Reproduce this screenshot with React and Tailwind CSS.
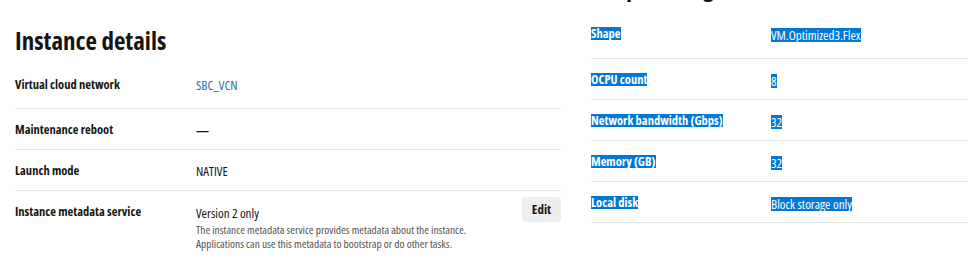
import React from 'react';

const font = { fontFamily: '"Open Sans", "Noto Sans", sans-serif', fontStretch: 'condensed' };

function Row({ label, children, className = "pt-[14px] pb-[12px]" }) {
  return (
    <div className={"flex items-start border-b border-[#e4e3e1] " + className}>
      <div className="w-[181px] shrink-0 text-[12.5px] leading-[14px] font-bold text-[#161513]">{label}</div>
      <div className="text-[13px] leading-[14px] text-[#161513]">{children}</div>
    </div>
  );
}

function ShapeRow({ label, value, className = "pt-[14px] pb-[11px]" }) {
  return (
    <div className={"flex items-start border-b border-[#e4e3e1] " + className}>
      <div className="flex w-[180px] shrink-0 text-[12.5px] font-bold">
        <span className="h-[13px] leading-[13px] bg-[#0078d7] text-white whitespace-nowrap">{label}</span>
      </div>
      <div className="mt-[1px] flex text-[13px]">
        <span className="h-[14px] leading-[14px] bg-[#0078d7] text-white whitespace-nowrap">{value}</span>
      </div>
    </div>
  );
}

export default function App() {
  return (
    <div className="w-[968px] h-[259px] overflow-hidden bg-white flex" style={font}>
      {/* instance details */}
      <div className="ml-[15px] w-[546px] shrink-0">
        <h2 className="mt-[25px] mb-[9px] text-[25px] leading-[30px] font-bold text-[#161513]">Instance details</h2>
        <Row label="Virtual cloud network" className="pt-[14px] pb-[16px]">
          <a className="text-[#2a6fa6]">SBC_VCN</a>
        </Row>
        <Row label="Maintenance reboot">
          <span className="font-bold">—</span>
        </Row>
        <Row label="Launch mode">NATIVE</Row>
        <div className="flex items-start pt-[6px]">
          <div className="mt-[8px] w-[181px] shrink-0 text-[12.5px] leading-[14px] font-bold text-[#161513]">
            Instance metadata service
          </div>
          <div className="mt-[9px] flex-1">
            <div className="text-[13px] leading-[14px] text-[#161513]">Version 2 only</div>
            <div className="mt-[3px] text-[11.4px] leading-[13.5px] text-[#55534f]">
              <p>The instance metadata service provides metadata about the instance.</p>
              <p>Applications can use this metadata to bootstrap or do other tasks.</p>
            </div>
          </div>
          <button className="h-[25px] w-[39px] rounded-[3px] bg-[#eeeeee] text-[13px] font-bold text-[#161513]">
            Edit
          </button>
        </div>
      </div>

      {/* shape configuration */}
      <div className="ml-[30px] flex-1">
        <h2 className="-mt-[29px] text-[25px] leading-[30px] font-bold text-[#161513] whitespace-nowrap">
          Shape configuration
        </h2>
        <ShapeRow label="Shape" value="VM.Optimized3.Flex" className="pt-[26px] pb-[16px]" />
        <ShapeRow label="OCPU count" value="8" />
        <ShapeRow label="Network bandwidth (Gbps)" value="32" />
        <ShapeRow label="Memory (GB)" value="32" />
        <ShapeRow label="Local disk" value="Block storage only" />
      </div>
    </div>
  );
}
